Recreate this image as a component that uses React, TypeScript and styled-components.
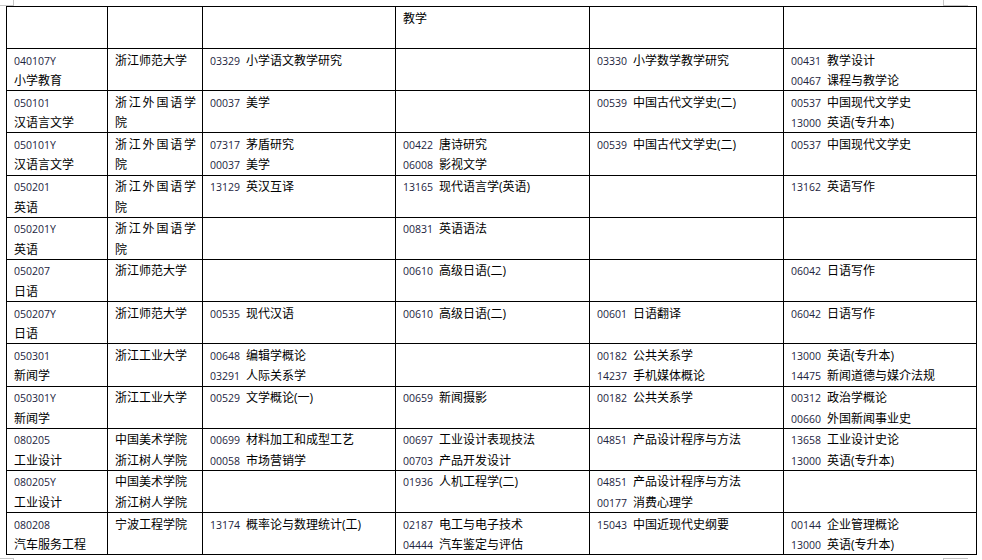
import styled, { createGlobalStyle } from 'styled-components';

const GlobalStyle = createGlobalStyle`
  html, body {
    margin: 0;
    padding: 0;
    background: #ffffff;
  }
  body {
    font-family: "Open Sans", "Noto Sans CJK SC", sans-serif;
    color: #000;
  }
`;

const Page = styled.div`
  position: relative;
  width: 982px;
  height: 560px;
  padding: 6px 0 0 6px;
  box-sizing: border-box;
  overflow: hidden;
`;

const CornerMark = styled.div<{ $x: number; $y: number; $w: number; $h: number; $edges: string }>`
  position: absolute;
  left: ${(p) => p.$x}px;
  top: ${(p) => p.$y}px;
  width: ${(p) => p.$w}px;
  height: ${(p) => p.$h}px;
  box-sizing: border-box;
  ${(p) => p.$edges.split(' ').map((e) => `border-${e}: 1px solid #c6c6c6;`).join('\n')}
`;

const Table = styled.table`
  border-collapse: collapse;
  table-layout: fixed;
  width: 970px;
`;

const HeadRow = styled.tr`
  height: 42px;
`;

const Cell = styled.td`
  border: 1px solid #000;
  padding: 0 6px 0 7px;
  vertical-align: top;
  font-size: 12px;
  line-height: 20.6px;
  text-align: justify;
  font-family: "Open Sans", "Noto Sans CJK SC", sans-serif;
`;

const Line = styled.div`
  box-sizing: border-box;
  height: 20.6px;
  padding-top: 1.5px;
  white-space: nowrap;
`;

const WrapLine = styled.div`
  padding-top: 1.5px;
  margin-bottom: -1.5px;
  text-align: justify;
`;

const Code = styled.span<{ $gap?: boolean }>`
  font-family: "Open Sans", sans-serif;
  font-size: 10.5px;
  color: #1c2440;
  margin-right: ${(p) => (p.$gap ? '6px' : '0')};
`;

type Course = [string, string];

interface Row {
  code: string;
  major: string;
  school: string[];
  wrapSchool?: boolean;
  c3: Course[];
  c4: Course[];
  c5: Course[];
  c6: Course[];
}

const rows: Row[] = [
  {
    code: '040107Y', major: '小学教育', school: ['浙江师范大学'],
    c3: [['03329', '小学语文教学研究']], c4: [],
    c5: [['03330', '小学数学教学研究']],
    c6: [['00431', '教学设计'], ['00467', '课程与教学论']],
  },
  {
    code: '050101', major: '汉语言文学', school: ['浙江外国语学院'], wrapSchool: true,
    c3: [['00037', '美学']], c4: [],
    c5: [['00539', '中国古代文学史(二)']],
    c6: [['00537', '中国现代文学史'], ['13000', '英语(专升本)']],
  },
  {
    code: '050101Y', major: '汉语言文学', school: ['浙江外国语学院'], wrapSchool: true,
    c3: [['07317', '茅盾研究'], ['00037', '美学']],
    c4: [['00422', '唐诗研究'], ['06008', '影视文学']],
    c5: [['00539', '中国古代文学史(二)']],
    c6: [['00537', '中国现代文学史']],
  },
  {
    code: '050201', major: '英语', school: ['浙江外国语学院'], wrapSchool: true,
    c3: [['13129', '英汉互译']], c4: [['13165', '现代语言学(英语)']],
    c5: [], c6: [['13162', '英语写作']],
  },
  {
    code: '050201Y', major: '英语', school: ['浙江外国语学院'], wrapSchool: true,
    c3: [], c4: [['00831', '英语语法']], c5: [], c6: [],
  },
  {
    code: '050207', major: '日语', school: ['浙江师范大学'],
    c3: [], c4: [['00610', '高级日语(二)']], c5: [], c6: [['06042', '日语写作']],
  },
  {
    code: '050207Y', major: '日语', school: ['浙江师范大学'],
    c3: [['00535', '现代汉语']], c4: [['00610', '高级日语(二)']],
    c5: [['00601', '日语翻译']], c6: [['06042', '日语写作']],
  },
  {
    code: '050301', major: '新闻学', school: ['浙江工业大学'],
    c3: [['00648', '编辑学概论'], ['03291', '人际关系学']], c4: [],
    c5: [['00182', '公共关系学'], ['14237', '手机媒体概论']],
    c6: [['13000', '英语(专升本)'], ['14475', '新闻道德与媒介法规']],
  },
  {
    code: '050301Y', major: '新闻学', school: ['浙江工业大学'],
    c3: [['00529', '文学概论(一)']], c4: [['00659', '新闻摄影']],
    c5: [['00182', '公共关系学']],
    c6: [['00312', '政治学概论'], ['00660', '外国新闻事业史']],
  },
  {
    code: '080205', major: '工业设计', school: ['中国美术学院', '浙江树人学院'],
    c3: [['00699', '材料加工和成型工艺'], ['00058', '市场营销学']],
    c4: [['00697', '工业设计表现技法'], ['00703', '产品开发设计']],
    c5: [['04851', '产品设计程序与方法']],
    c6: [['13658', '工业设计史论'], ['13000', '英语(专升本)']],
  },
  {
    code: '080205Y', major: '工业设计', school: ['中国美术学院', '浙江树人学院'],
    c3: [], c4: [['01936', '人机工程学(二)']],
    c5: [['04851', '产品设计程序与方法'], ['00177', '消费心理学']],
    c6: [],
  },
  {
    code: '080208', major: '汽车服务工程', school: ['宁波工程学院'],
    c3: [['13174', '概率论与数理统计(工)']],
    c4: [['02187', '电工与电子技术'], ['04444', '汽车鉴定与评估']],
    c5: [['15043', '中国近现代史纲要']],
    c6: [['00144', '企业管理概论'], ['13000', '英语(专升本)']],
  },
];

const widths = [101, 95, 193, 194, 194, 193];

function CourseCell({ items }: { items: Course[] }) {
  return (
    <Cell>
      {items.map(([code, name]) => (
        <Line key={code + name}>
          <Code $gap>{code}</Code>
          {name}
        </Line>
      ))}
    </Cell>
  );
}

export default function App() {
  return (
    <>
      <GlobalStyle />
      <Page>
        <CornerMark $x={0} $y={0} $w={14} $h={6} $edges="right bottom" />
        <CornerMark $x={943} $y={0} $w={25} $h={6} $edges="left bottom" />
        <CornerMark $x={0} $y={558} $w={14} $h={4} $edges="right top" />
        <CornerMark $x={943} $y={558} $w={25} $h={4} $edges="left top" />
        <Table>
          <colgroup>
            {widths.map((w, i) => (
              <col key={i} style={{ width: w }} />
            ))}
          </colgroup>
          <tbody>
            <HeadRow>
              <Cell />
              <Cell />
              <Cell />
              <Cell>
                <Line>教学</Line>
              </Cell>
              <Cell />
              <Cell />
            </HeadRow>
            {rows.map((r) => (
              <tr key={r.code}>
                <Cell>
                  <Line>
                    <Code>{r.code}</Code>
                  </Line>
                  <Line>{r.major}</Line>
                </Cell>
                <Cell>
                  {r.wrapSchool ? (
                    <WrapLine>{r.school[0]}</WrapLine>
                  ) : (
                    r.school.map((s) => <Line key={s}>{s}</Line>)
                  )}
                  {!r.wrapSchool && r.school.length === 1 && <Line />}
                </Cell>
                <CourseCell items={r.c3} />
                <CourseCell items={r.c4} />
                <CourseCell items={r.c5} />
                <CourseCell items={r.c6} />
              </tr>
            ))}
          </tbody>
        </Table>
      </Page>
    </>
  );
}
